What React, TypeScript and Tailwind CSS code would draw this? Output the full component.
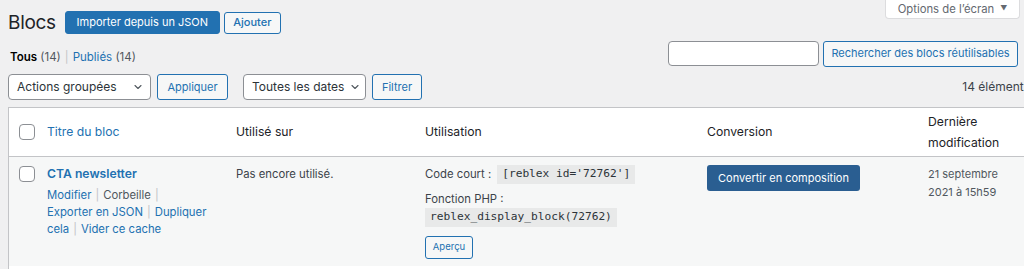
import React from "react";

const Chevron = () => (
  <svg width="12" height="12" viewBox="0 0 20 20" className="shrink-0">
    <path d="M5 7.5l5 5 5-5" fill="none" stroke="#50575e" strokeWidth="1.8" strokeLinecap="round" strokeLinejoin="round" />
  </svg>
);

const Checkbox = () => (
  <span className="block w-[16px] h-[16px] rounded-[4px] border border-[#8c8f94] bg-white" />
);

const Sep = () => <span className="text-[#c3c4c7] mx-[4px]">|</span>;

export default function App() {
  return (
    <div className="w-[1024px] h-[269px] overflow-hidden bg-[#f0f0f1] text-[11.3px] text-[#3c434a] whitespace-nowrap font-['Inter','Liberation_Sans',sans-serif]">
      <div className="w-[1012px] ml-[8px]">
        {/* Header row */}
        <div className="flex justify-between items-start h-[40px]">
          <div className="flex items-center gap-[4px] pt-[11px]">
            <h1 className="text-[19px] leading-[23px] text-[#1d2327] mr-[5px] tracking-[-0.3px]">Blocs</h1>
            <span className="h-[23px] w-[155px] flex items-center justify-center bg-[#2271b1] text-white rounded-[3px] text-[11px] border border-[#2271b1]">
              Importer depuis un JSON
            </span>
            <span className="h-[22px] w-[57px] flex items-center justify-center bg-[#f6f7f7] text-[#2271b1] rounded-[3px] border border-[#2271b1] text-[11px] font-medium">
              Ajouter
            </span>
          </div>
          <div className="h-[19px] w-[135px] bg-white border border-t-0 border-[#dcdcde] rounded-b-[4px] flex items-center justify-center gap-[6px] text-[11.3px] text-[#646970]">
            <span>Options de l’écran</span>
            <span className="text-[7px]">▼</span>
          </div>
        </div>

        {/* Subsubsub + search */}
        <div className="flex justify-between items-center h-[27px]">
          <div className="pt-[9px] pl-[2px] text-[11.5px]">
            <span className="font-semibold text-black">Tous</span>
            <span className="text-[#50575e]"> (14)</span>
            <Sep />
            <span className="text-[#2271b1]">Publiés</span>
            <span className="text-[#50575e]"> (14)</span>
          </div>
          <div className="flex items-center gap-[4px] mr-[2px]">
            <span className="block w-[151px] h-[25px] bg-white border border-[#8c8f94] rounded-[4px]" />
            <span className="h-[26px] w-[195px] flex items-center justify-center bg-[#f6f7f7] border border-[#2271b1] rounded-[3px] text-[#2271b1] text-[11px]">
              Rechercher des blocs réutilisables
            </span>
          </div>
        </div>

        {/* Tablenav */}
        <div className="w-[1022px] flex items-center h-[26px] mt-[7px]">
          <div className="w-[143px] h-[26px] bg-white border border-[#8c8f94] rounded-[4px] flex items-center justify-between pl-[8px] pr-[6px] text-[12px] text-[#2c3338]">
            <span>Actions groupées</span>
            <Chevron />
          </div>
          <span className="ml-[6px] w-[71px] h-[26px] flex items-center justify-center bg-[#f6f7f7] border border-[#2271b1] rounded-[3px] text-[#2271b1] text-[11px]">
            Appliquer
          </span>
          <div className="ml-[15px] w-[123px] h-[26px] bg-white border border-[#8c8f94] rounded-[4px] flex items-center justify-between pl-[8px] pr-[4px] text-[12px] text-[#2c3338]">
            <span>Toutes les dates</span>
            <Chevron />
          </div>
          <span className="ml-[6px] w-[50px] h-[26px] flex items-center justify-center bg-[#f6f7f7] border border-[#2271b1] rounded-[3px] text-[#2271b1] text-[11px]">
            Filtrer
          </span>
          <span className="ml-auto text-[12px] text-[#3c434a]">14 éléments</span>
        </div>

        {/* Table */}
        <div className="w-[1100px] mt-[7px] border border-[#c3c4c7] bg-white">
          <div className="grid grid-cols-[38px_189px_189px_282px_221px_181px] h-[49px] items-center border-b border-[#c3c4c7] text-[12.2px] text-[#1d2327]">
            <div className="pl-[10px]"><Checkbox /></div>
            <div className="text-[#2271b1]">Titre du bloc</div>
            <div>Utilisé sur</div>
            <div>Utilisation</div>
            <div>Conversion</div>
            <div className="leading-[21px]">Dernière<br />modification</div>
          </div>
          <div className="grid grid-cols-[38px_189px_189px_282px_221px_181px] h-[109px] bg-[#f6f7f7] pt-[8px] text-[11.3px]">
            <div className="pl-[10px] pt-[1px]"><Checkbox /></div>
            <div>
              <div className="text-[12.2px] font-semibold text-[#2271b1] leading-[18px]">CTA newsletter</div>
              <div className="mt-[4px] leading-[17px] text-[#2271b1]">
                <div>Modifier<Sep /><span className="text-[#50575e]">Corbeille</span><Sep /></div>
                <div>Exporter en JSON<Sep />Dupliquer</div>
                <div>cela<Sep />Vider ce cache</div>
              </div>
            </div>
            <div className="leading-[16px] pt-[1px]">Pas encore utilisé.</div>
            <div>
              <div className="flex items-center h-[19px]">
                <span>Code court :</span>
                <code className="ml-[6px] h-[19px] flex items-center px-[5px] bg-[#e8e9e9] font-['DejaVu_Sans_Mono',monospace] text-[11.2px] text-[#2c3338]">[reblex id='72762']</code>
              </div>
              <div className="mt-[7px] leading-[16px]">Fonction PHP :</div>
              <code className="mt-[1px] h-[19px] inline-flex items-center px-[5px] bg-[#e8e9e9] font-['DejaVu_Sans_Mono',monospace] text-[11.2px] text-[#2c3338]">reblex_display_block(72762)</code>
              <div className="mt-[9px]">
                <span className="inline-flex w-[48px] h-[23px] items-center justify-center bg-[#f6f7f7] border border-[#2271b1] rounded-[3px] text-[#2271b1] text-[9.5px]">Aperçu</span>
              </div>
            </div>
            <div>
              <span className="inline-flex w-[153px] h-[26px] items-center justify-center bg-[#2a5e91] rounded-[3px] text-white text-[11px]">Convertir en composition</span>
            </div>
            <div className="text-[#50575e] leading-[18px] text-[11px]">21 septembre<br />2021 à 15h59</div>
          </div>
          <div className="h-[20px] bg-white" />
        </div>
      </div>
    </div>
  );
}
